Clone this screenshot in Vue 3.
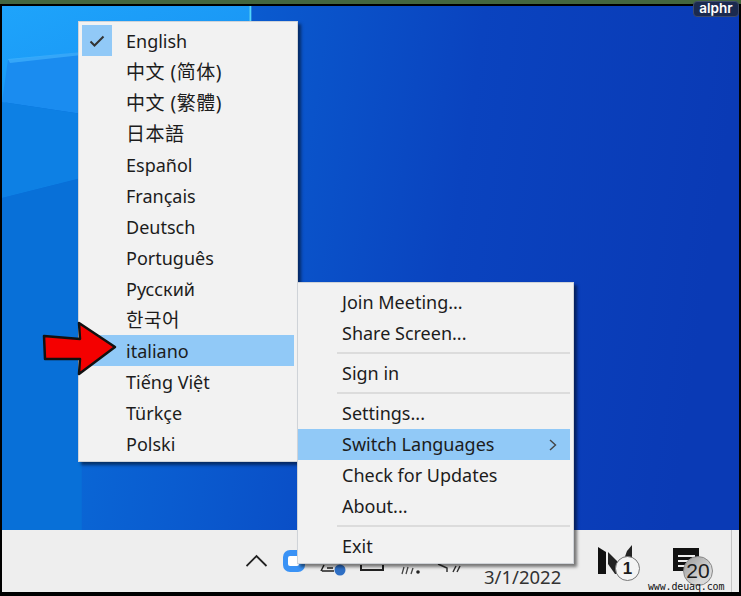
<script setup>
const languages = [
  { label: 'English', checked: true },
  { label: '中文 (简体)', cjk: true },
  { label: '中文 (繁體)', cjk: true },
  { label: '日本語', cjk: true },
  { label: 'Español' },
  { label: 'Français' },
  { label: 'Deutsch' },
  { label: 'Português' },
  { label: 'Русский' },
  { label: '한국어', cjk: true },
  { label: 'italiano', active: true },
  { label: 'Tiếng Việt' },
  { label: 'Türkçe' },
  { label: 'Polski' }
]
const actions = [
  { label: 'Join Meeting...' },
  { label: 'Share Screen...' },
  { sep: true },
  { label: 'Sign in' },
  { sep: true },
  { label: 'Settings...' },
  { label: 'Switch Languages', active: true, more: true },
  { label: 'Check for Updates' },
  { label: 'About...' },
  { sep: true },
  { label: 'Exit' }
]
</script>

<template>
  <div class="frame">
    <div class="strip"></div>
    <div class="screen">
      <main class="desktop">
        <svg class="wall" viewBox="0 0 739 524" preserveAspectRatio="none">
          <defs>
            <linearGradient id="base" x1="0" y1="0" x2="1" y2="0.1">
              <stop offset="0" stop-color="#0a74dc" />
              <stop offset="0.32" stop-color="#0a5cd0" />
              <stop offset="0.65" stop-color="#0a43bf" />
              <stop offset="1" stop-color="#0a3ab5" />
            </linearGradient>
            <linearGradient id="shard" x1="0" y1="0" x2="1" y2="1">
              <stop offset="0" stop-color="#1ea4fb" />
              <stop offset="1" stop-color="#1890f2" />
            </linearGradient>
          </defs>
          <rect width="739" height="524" fill="url(#base)" />
          <polygon points="0,0 248,0 248,40 80,62 0,98" fill="url(#shard)" />
          <polygon points="0,96 6,54 80,46 248,28 248,110 80,108" fill="#1a8cf0" />
          <polygon points="6,53 80,46 248,27 248,30 80,49 8,57" fill="#4dbcff" opacity=".55" />
          <rect x="248" y="0" width="2" height="30" fill="#52d6fa" />
          <polygon points="0,96 80,108 80,172 0,192" fill="#0d80e4" />
          <polygon points="0,192 80,172 80,524 0,524" fill="#0870d8" />
        </svg>

        <ul class="menu menu-lang">
          <li v-for="l in languages" :key="l.label" class="item" :class="{ active: l.active }">
            <span class="gutter" :class="{ checked: l.checked }">
              <svg v-if="l.checked" width="16" height="12" viewBox="0 0 16 12">
                <path d="M1.5 6.5 L5.5 10.5 L14.5 1.5" fill="none" stroke="#333" stroke-width="2" />
              </svg>
            </span>
            <span class="label" :class="{ cjk: l.cjk }">{{ l.label }}</span>
          </li>
        </ul>

        <ul class="menu menu-main">
          <template v-for="(a, i) in actions" :key="i">
            <li v-if="a.sep" class="sep"></li>
            <li v-else class="item" :class="{ active: a.active }">
              <span>{{ a.label }}</span>
              <svg v-if="a.more" class="chev" width="8" height="12" viewBox="0 0 8 12">
                <path d="M1 1 L6.5 6 L1 11" fill="none" stroke="#444" stroke-width="1.4" />
              </svg>
            </li>
          </template>
        </ul>

        <svg class="arrow" width="76" height="56" viewBox="0 0 76 56">
          <polygon points="2,15 38,18 37,2 73,26 37,53 38,38 3,38" fill="#f40000" stroke="#111" stroke-width="2.5" stroke-linejoin="round" />
        </svg>
      </main>

      <footer class="taskbar">
        <svg class="tray" width="240" height="34" viewBox="0 0 240 34">
          <path d="M0.5 22 L10.5 12 L20.5 22" fill="none" stroke="#222" stroke-width="1.8" />
          <rect x="37" y="6" width="22" height="22" rx="7" fill="#3a92f5" />
          <rect x="42" y="12" width="11" height="10" rx="2" fill="#fff" />
          <path d="M75 27 L78 21 M76 27 H88 M81 24 H87" fill="none" stroke="#222" stroke-width="1.5" />
          <circle cx="94" cy="26" r="5.5" fill="#2f6fc4" />
          <path d="M115 21 V26 H137 V21" stroke="#222" stroke-width="2" fill="none" />
          <path d="M156 30 L158 23 M160 30 L162 23 M165 30 L167 24" stroke="#444" stroke-width="1.3" fill="none" />
          <circle cx="172" cy="28" r="1.8" fill="#222" />
          <path d="M192 20 L201 24 V28 M207 28 L210 22 M211 28 L214 22" stroke="#333" stroke-width="1.5" fill="none" />
        </svg>
        <span class="date">3/1/2022</span>
        <div class="mail">
          <svg width="34" height="30" viewBox="0 0 34 30">
            <path d="M0 2 L8 7 V29 H0 Z" fill="#111" />
            <path d="M10 7 L23 20 L25 29 H17 L10 19 Z" fill="#222" />
            <path d="M25 17 L29 6 L34 0 V18 Z" fill="#222" />
          </svg>
          <span class="count count-one">1</span>
        </div>
        <div class="note">
          <svg width="26" height="23" viewBox="0 0 26 23">
            <path d="M0 0 H26 V23 H0 Z" fill="#111" />
            <path d="M5 8 H22 M5 13 H22 M5 18 H15" stroke="#eee" stroke-width="1.8" />
          </svg>
          <span class="count count-twenty">20</span>
        </div>
        <span class="mark">www.deuaq.com</span>
        <span class="divider"></span>
      </footer>
    </div>
    <div class="badge">alphr</div>
  </div>
</template>

<style>
html, body { margin: 0; background: #000; }
</style>

<style scoped>
.frame {
  position: relative;
  width: 741px;
  height: 596px;
  background: #000;
  overflow: hidden;
  display: flex;
  flex-direction: column;
  font-family: "Noto Sans", "Noto Sans CJK SC", sans-serif;
  color: #1c1c1c;
}
.strip { height: 4px; background: #44663f; margin-bottom: 2px; flex: none; }
.screen {
  flex: none;
  height: 586px;
  margin: 0 2px;
  display: flex;
  flex-direction: column;
}
.desktop { position: relative; height: 524px; flex: none; }
.wall { position: absolute; inset: 0; width: 100%; height: 100%; display: block; }

.menu {
  position: absolute;
  z-index: 2;
  list-style: none;
  margin: 0;
  background: #f2f2f2;
  box-shadow: 3px 3px 3px rgba(0, 0, 0, .5);
  box-sizing: border-box;
  outline: 1px solid #cfd3d8;
  outline-offset: -1px;
}
.menu-lang { left: 76px; top: 15px; width: 220px; height: 441px; padding: 4px; }
.menu-main { left: 295px; top: 276px; width: 277px; height: 282px; padding: 5px 4px 5px 1px; }

.item {
  height: 31px;
  display: flex;
  align-items: center;
  font-size: 18px;
  line-height: 31px;
  white-space: nowrap;
}
.item.active { background: #91c9f7; }
.gutter {
  width: 30px;
  height: 31px;
  margin-right: 14px;
  flex: none;
  display: flex;
  align-items: center;
  justify-content: center;
}
.gutter.checked { background: #91c9f7; }
.label { padding-top: 2px; }
.label.cjk { font-size: 19px; letter-spacing: .5px; }
.menu-main .item { padding-left: 44px; position: relative; }
.chev { position: absolute; right: 13px; top: 10px; }
.sep { height: 2px; margin: 3px 0 4px 39px; background: #dcdcdc; }

.arrow { position: absolute; z-index: 3; left: 40px; top: 315px; }

.taskbar {
  position: relative;
  flex: 1;
  background: #eeeeee;
  display: flex;
  align-items: flex-start;
}
.tray { position: absolute; left: 244px; top: 14px; }
.date {
  position: absolute;
  left: 482px;
  top: 34px;
  font-size: 18.5px;
  line-height: 26px;
  color: #333;
}
.mail { position: absolute; left: 596px; top: 15px; }
.note { position: absolute; left: 671px; top: 18px; }
.count {
  position: absolute;
  border-radius: 50%;
  display: flex;
  align-items: center;
  justify-content: center;
  box-sizing: border-box;
  font-family: "Liberation Sans", sans-serif;
}
.count-one {
  left: 17px; top: 11px;
  width: 25px; height: 25px;
  background: #f4f4f4;
  border: 1.5px solid #777;
  font-weight: 700;
  font-size: 17px;
}
.count-twenty {
  left: 10px; top: 8px;
  width: 30px; height: 30px;
  background: linear-gradient(135deg, #9a9a9a, #d8d8d8 70%);
  border: 1.5px solid #888;
  font-size: 21px;
  line-height: 18px;
}
.mark {
  position: absolute;
  left: 646px;
  top: 52px;
  z-index: 1;
  font-family: "DejaVu Sans Mono", monospace;
  font-size: 10px;
  line-height: 10px;
  letter-spacing: -.15px;
  color: #111;
}
.divider { position: absolute; left: 729px; top: 0; bottom: 0; width: 1px; background: #c4c4c4; }

.badge {
  position: absolute;
  z-index: 4;
  left: 693px;
  top: 1px;
  width: 46px;
  height: 16px;
  box-sizing: border-box;
  border: 1px solid #3d4a6b;
  border-radius: 4px;
  background: #1b2a4f;
  color: #fff;
  font-family: "Inter", sans-serif;
  font-weight: 600;
  font-size: 13.5px;
  line-height: 12px;
  text-align: center;
}
</style>
